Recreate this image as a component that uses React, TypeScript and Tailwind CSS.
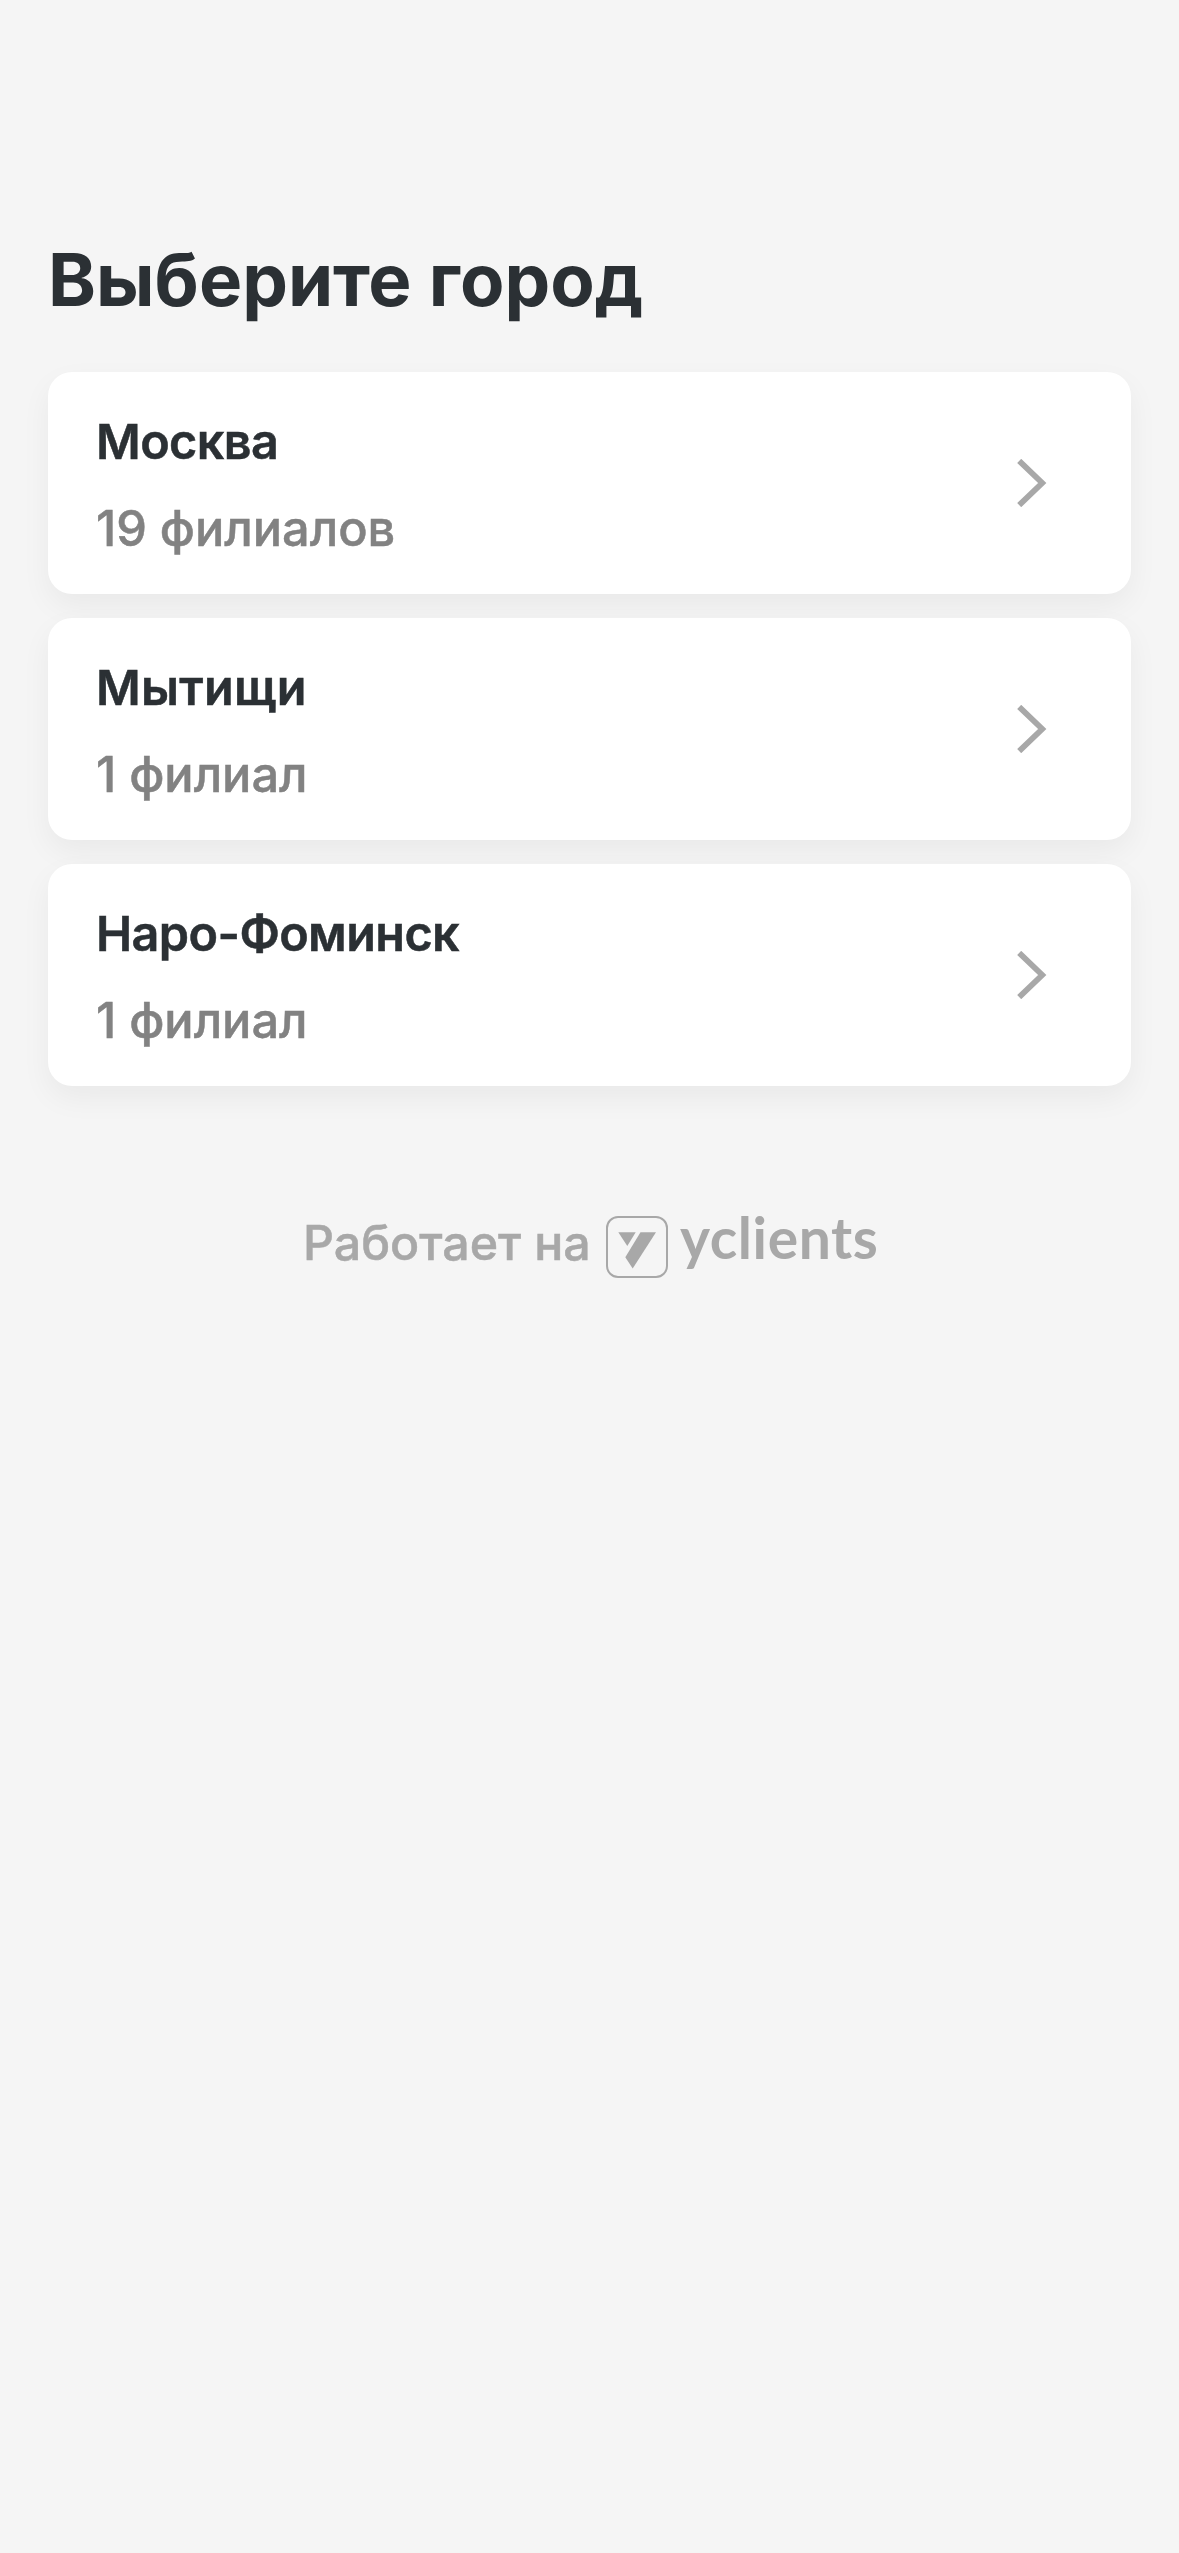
interface City {
    name: string
    branches: string
    tracking: string
}

const cities: City[] = [
    { name: 'Москва', branches: '19 филиалов', tracking: 'tracking-[-0.6px]' },
    { name: 'Мытищи', branches: '1 филиал', tracking: 'tracking-[0.3px]' },
    { name: 'Наро-Фоминск', branches: '1 филиал', tracking: 'tracking-[-0.6px]' }
]

function ChevronIcon() {
    return (
        <svg width="48" height="48" viewBox="0 0 48 48" fill="none" className="shrink-0">
            <path d="M11.2 1.9L34.2 24L11.2 46.1" stroke="#a8a8a8" strokeWidth="5.8" />
        </svg>
    )
}

function LogoMark() {
    return (
        <svg width="62" height="62" viewBox="0 0 62 62" fill="none" className="mt-px shrink-0">
            <rect x="1" y="1" width="60" height="60" rx="11" stroke="#a8a8a8" strokeWidth="2" />
            <path d="M12.3 16.2H29.7L21.3 30Z" fill="#a8a8a8" />
            <path d="M34.5 16.2H50L26.7 52.4L19.3 41.2Z" fill="#a8a8a8" />
        </svg>
    )
}

function CityCard({ city }: { city: City }) {
    return (
        <button className="flex h-[222px] w-full items-center justify-between rounded-3xl bg-white pr-[75px] pl-12 text-left shadow-[0_12px_30px_rgba(0,0,0,0.05)]">
            <div className="pt-[5px] [-webkit-text-stroke-width:0.5px]">
                <p className={`text-[48.5px] leading-[72px] font-semibold text-[#2b3034] ${city.tracking}`}>
                    {city.name}
                </p>
                <p className="mt-[15px] text-[48.7px] leading-[72px] font-medium text-[#828282]">{city.branches}</p>
            </div>
            <ChevronIcon />
        </button>
    )
}

export default function App() {
    return (
        <div className="min-h-screen bg-[#f5f5f5] px-12 pt-[232px] font-['Inter',sans-serif]">
            <h1 className="text-[72.6px] leading-[96px] font-bold text-[#2b3034]">Выберите город</h1>

            {/* Cities */}
            <div className="mt-11 flex flex-col gap-6">
                {cities.map((city) => (
                    <CityCard key={city.name} city={city} />
                ))}
            </div>

            {/* Footer */}
            <div className="mt-[129px] flex items-start pl-[255px] text-[#a8a8a8]">
                <span className="w-[303px] shrink-0 text-[48.3px] leading-[56px] font-medium [-webkit-text-stroke-width:0.5px]">
                    Работает на
                </span>
                <LogoMark />
                <span className="ml-3 font-['Lato',sans-serif] text-[57px] leading-[44px] font-bold tracking-[0.6px]">
                    yclients
                </span>
            </div>
        </div>
    )
}
